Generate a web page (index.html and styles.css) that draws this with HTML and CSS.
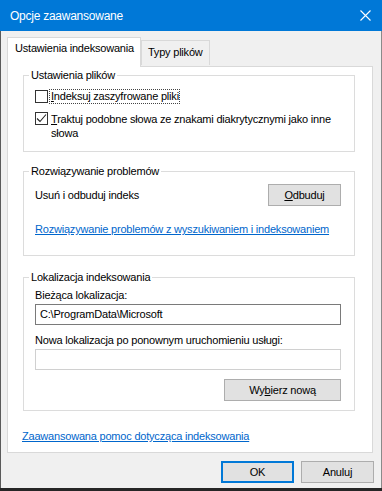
FILE: index.html
```html
<!DOCTYPE html>
<html>
<head>
<meta charset="utf-8" />
<title>Opcje zaawansowane</title>
<link rel="stylesheet" href="styles.css">
</head>
<body>
<div class="window">
	<div class="titlebar">
		<span class="title">Opcje zaawansowane</span>
		<svg class="close" width="11" height="11" viewBox="0 0 11 11"><path d="M0.5 0.5 L10.5 10.5 M10.5 0.5 L0.5 10.5" stroke="#fff" stroke-width="1.1" fill="none"/></svg>
	</div>

	<div class="body">
		<div class="tabs">
			<div class="tab active">Ustawienia indeksowania</div>
			<div class="tab">Typy plików</div>
		</div>

		<div class="panel">
			<!-- ustawienia plikow -->
			<fieldset class="group group-files">
				<legend>Ustawienia plików</legend>
				<div class="check-row">
					<span class="box"></span>
					<span class="label focus"><u>I</u>ndeksuj zaszyfrowane pliki</span>
				</div>
				<div class="check-row">
					<span class="box"><svg width="11" height="11" viewBox="0 0 11 11"><path d="M1 5.5 L4 8.5 L10 1.5" stroke="#222" stroke-width="1.1" fill="none"/></svg></span>
					<span class="label">
						<span class="line"><u>T</u>raktuj podobne słowa ze znakami diakrytycznymi jako inne</span>
						<span class="line">słowa</span>
					</span>
				</div>
			</fieldset>

			<!-- rozwiazywanie problemow -->
			<fieldset class="group group-trouble">
				<legend>Rozwiązywanie problemów</legend>
				<div class="rebuild-row">
					<span>Usuń i odbuduj indeks</span>
					<span class="btn btn-rebuild"><u>O</u>dbuduj</span>
				</div>
				<a class="link" href="#">Rozwiązywanie problemów z wyszukiwaniem i indeksowaniem</a>
			</fieldset>

			<!-- lokalizacja -->
			<fieldset class="group group-location">
				<legend>Lokalizacja indeksowania</legend>
				<div class="field-label">Bieżąca lokalizacja:</div>
				<div class="input">C:\ProgramData\Microsoft</div>
				<div class="field-label second">Nowa lokalizacja po ponownym uruchomieniu usługi:</div>
				<div class="input empty"></div>
				<div class="choose-row">
					<span class="btn btn-choose">Wy<u>b</u>ierz nową</span>
				</div>
			</fieldset>

			<a class="link help" href="#">Zaawansowana pomoc dotycząca indeksowania</a>
		</div>

		<div class="footer">
			<span class="btn btn-ok">OK</span>
			<span class="btn btn-cancel">Anuluj</span>
		</div>
	</div>
</div>
</body>
</html>
```

FILE: styles.css
```css
body {
	margin: 0;
	background: #f0f0f0;
	font-family: "Liberation Sans", Arial, sans-serif;
	font-size: 11px;
	letter-spacing: -0.2px;
	color: #000;
}

.window {
	width: 382px;
	height: 491px;
	box-sizing: border-box;
	display: flex;
	flex-direction: column;
	background: #f0f0f0;
	border-bottom: 3px solid #262626;
}

.titlebar {
	height: 31px;
	flex: none;
	background: #0078d7;
	display: flex;
	align-items: center;
	justify-content: space-between;
	padding: 0 11px 0 10px;
}

.title {
	color: #fff;
	font-size: 12px;
	letter-spacing: -0.25px;
}

.close {
	display: block;
}

.body {
	flex: 1;
	display: flex;
	flex-direction: column;
	border-left: 1px solid #5a5a5a;
	border-right: 1px solid #8a8a8a;
	padding: 6px 8px 0 6px;
}

.tabs {
	display: flex;
	align-items: flex-end;
	height: 29px;
	position: relative;
	z-index: 1;
}

.tab {
	box-sizing: border-box;
	border: 1px solid #d9d9d9;
	border-bottom: none;
	line-height: 22px;
	height: 25px;
	padding: 0 6px;
	background: #f0f0f0;
	margin-bottom: 1px;
}

.tab.active {
	background: #fff;
	height: 30px;
	line-height: 20px;
	padding: 0 6px 0 7px;
	margin-bottom: -1px;
}

.panel {
	box-sizing: border-box;
	height: 387px;
	background: #fff;
	border: 1px solid #d9d9d9;
	padding: 1px 17px 0 15px;
}

.group {
	margin: 0;
	border: 1px solid #dcdcdc;
	padding: 0 13px 0 11px;
}

.group legend {
	padding: 0 2px;
	margin-left: -6px;
	line-height: 14px;
}

.group-files {
	padding-top: 8px;
	padding-bottom: 11px;
}

.check-row {
	display: flex;
	align-items: flex-start;
	line-height: 13px;
}

.check-row + .check-row {
	margin-top: 9px;
	line-height: 14px;
}

.line {
	display: block;
}

.box {
	flex: none;
	box-sizing: border-box;
	width: 13px;
	height: 13px;
	border: 1px solid #333;
	background: #fff;
	margin-right: 3px;
	display: flex;
	align-items: center;
	justify-content: center;
}

.label.focus {
	outline: 1px dotted #444;
	outline-offset: 0;
	margin-left: -1px;
	padding-left: 1px;
}

.group-trouble {
	margin-top: 12px;
	padding-top: 6px;
	padding-bottom: 19px;
}

.rebuild-row {
	display: flex;
	align-items: center;
	justify-content: space-between;
	height: 22px;
}

.btn {
	box-sizing: border-box;
	display: inline-flex;
	align-items: center;
	justify-content: center;
	height: 22px;
	background: #e1e1e1;
	border: 1px solid #adadad;
}

.btn-rebuild {
	width: 73px;
}

.link {
	display: block;
	color: #0066cc;
	text-decoration: underline;
	line-height: 14px;
	margin-top: 16px;
}

.group-location {
	margin-top: 14px;
	padding-top: 4px;
	padding-bottom: 9px;
}

.field-label {
	line-height: 14px;
}

.field-label.second {
	margin-top: 8px;
}

.input {
	box-sizing: border-box;
	height: 21px;
	margin-top: 2px;
	border: 1px solid #7a7a7a;
	background: #fff;
	padding: 0 4px;
	line-height: 19px;
}

.input.empty {
	border-color: #d0d0d0;
}

.choose-row {
	display: flex;
	justify-content: flex-end;
	margin-top: 9px;
}

.btn-choose {
	width: 117px;
}

.help {
	margin: 18px 0 0 -1px;
}

.footer {
	display: flex;
	justify-content: flex-end;
	gap: 7px;
	padding-top: 8px;
	margin-right: -1px;
}

.btn-ok,
.btn-cancel {
	width: 73px;
}

.btn-ok {
	border-color: #0078d7;
	box-shadow: inset 0 0 0 1px #0078d7;
}
```
